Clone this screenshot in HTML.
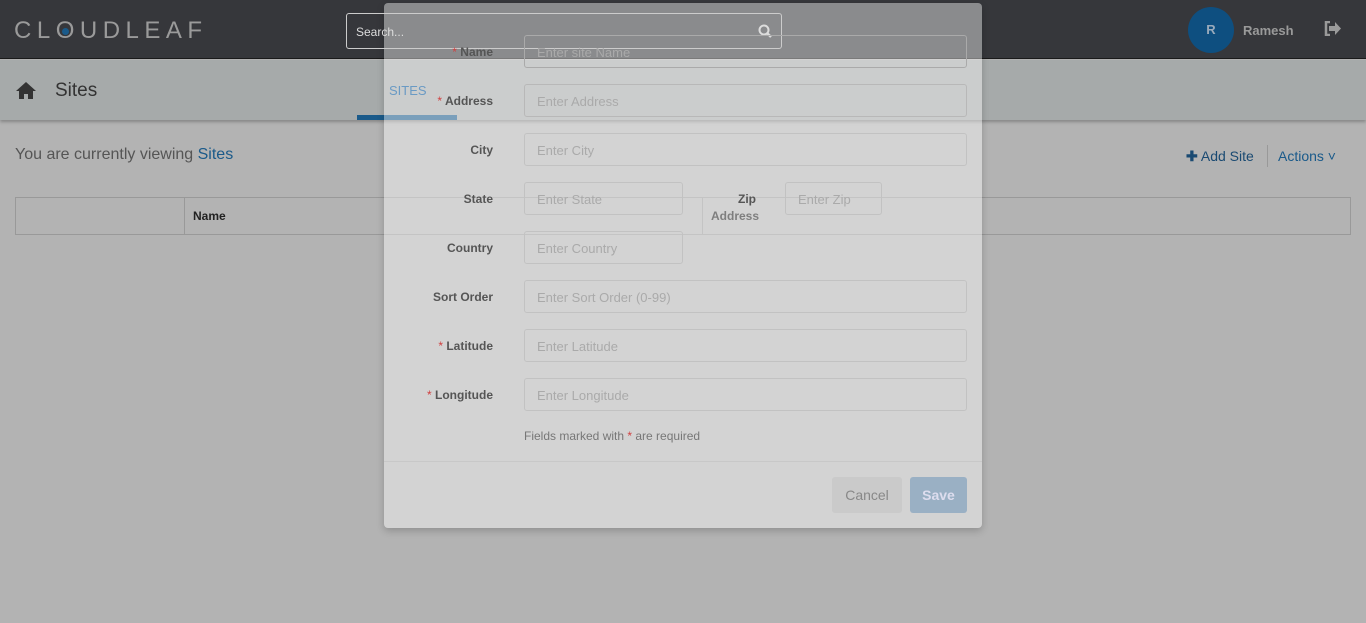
<!DOCTYPE html>
<html><head><meta charset="utf-8"><style>
*{box-sizing:border-box;margin:0;padding:0}
body{width:1366px;height:623px;overflow:hidden;background:#b3b3b3;font-family:"Liberation Sans",sans-serif;position:relative}
.a{position:absolute}
.hdr{left:0;top:0;width:1366px;height:59px;background:#36373b;border-bottom:1px solid #1a1a1a}
.sub{left:0;top:60px;width:1366px;height:60px;background:#a6aaaa;box-shadow:0 2px 3px rgba(0,0,0,.25)}
.lbl{right:873px;font-size:12px;font-weight:bold;color:#555;text-align:right}
.lbl b{color:#d04040;font-weight:normal}
.inp{left:524px;width:443px;height:33px;border:1px solid #c2c2c2;border-radius:3px;font-size:13px;color:#aaa;padding:9px 12px}
</style></head><body>
<div class="a hdr"></div>
<div class="a" style="left:14px;top:17px;font-size:24px;letter-spacing:5.5px;color:#9a9a9a;font-weight:300">CL<span style="position:relative">O<span class="a" style="left:6px;top:11px;width:7px;height:7px;border-radius:50%;background:#1a5a8a"></span></span>UDLEAF</div>
<div class="a" style="left:1188px;top:7px;width:46px;height:46px;border-radius:50%;background:#0e4f80;color:#9ab;font-weight:bold;font-size:13px;text-align:center;line-height:46px">R</div>
<div class="a" style="left:1243px;top:23px;font-size:13px;font-weight:bold;color:#9a9a9a">Ramesh</div>
<svg class="a" style="left:1324px;top:21px" width="17" height="15" viewBox="0 0 17 15"><path d="M6 1H2v13h4" fill="none" stroke="#9a9a9a" stroke-width="2.5"/><path d="M5 5h6V1l6 6.5-6 6.5V10H5z" fill="#9a9a9a"/></svg>
<div class="a sub"></div>
<svg class="a" style="left:15px;top:81px" width="22" height="18" viewBox="0 0 22 18"><path d="M11 1L1 10h3v8h5v-5h4v5h5v-8h3z" fill="#333"/></svg>
<div class="a" style="left:55px;top:80px;font-size:19px;color:#333">Sites</div>
<div class="a" style="left:357px;top:115px;width:100px;height:5px;background:#1a5a8a"></div>
<div class="a" style="left:15px;top:146px;font-size:16px;color:#555">You are currently viewing <span style="color:#1a5a8a">Sites</span></div>
<div class="a" style="left:1186px;top:148px;font-size:14px;color:#1a4a72"><b>✚</b> Add Site</div>
<div class="a" style="left:1267px;top:145px;width:1px;height:22px;background:#999"></div>
<div class="a" style="left:1278px;top:148px;font-size:14px;color:#1a5a8a">Actions ˅</div>
<div class="a" style="left:15px;top:197px;width:1336px;height:38px;border:1px solid #999"></div>
<div class="a" style="left:184px;top:198px;width:1px;height:36px;background:#999"></div>
<div class="a" style="left:702px;top:198px;width:1px;height:36px;background:#999"></div>
<div class="a" style="left:193px;top:209px;font-size:12px;font-weight:bold;color:#222">Name</div>
<div class="a" style="left:711px;top:209px;font-size:12px;font-weight:bold;color:#222">Address</div>
<div class="a" style="left:384px;top:3px;width:598px;height:525px;background:rgba(255,255,255,.42);border-radius:4px;box-shadow:0 3px 8px rgba(0,0,0,.2)"></div>
<div class="a" style="left:346px;top:13px;width:436px;height:36px;border:1px solid #ccc;border-radius:3px;color:#ddd;font-size:12px;padding:11px 9px">Search...<svg class="a" style="right:9px;top:10px" width="14" height="14" viewBox="0 0 14 14"><circle cx="6" cy="6" r="4.5" fill="none" stroke="#ddd" stroke-width="2"/><path d="M9 9l4 4" stroke="#ddd" stroke-width="2.5"/></svg></div>
<div class="a" style="left:389px;top:83px;font-size:13px;color:#6a9ac4">SITES</div>
<div class="a lbl" style="top:45px"><b>*</b> Name</div><div class="a inp" style="top:35px;border-color:#aaa">Enter site Name</div>
<div class="a lbl" style="top:94px"><b>*</b> Address</div><div class="a inp" style="top:84px;border-color:#b8b8b8">Enter Address</div>
<div class="a lbl" style="top:143px">City</div><div class="a inp" style="top:133px">Enter City</div>
<div class="a lbl" style="top:192px">State</div><div class="a inp" style="top:182px;width:159px">Enter State</div>
<div class="a" style="left:738px;top:192px;font-size:12px;font-weight:bold;color:#555">Zip</div>
<div class="a inp" style="top:182px;left:785px;width:97px">Enter Zip</div>
<div class="a lbl" style="top:241px">Country</div><div class="a inp" style="top:231px;width:159px">Enter Country</div>
<div class="a lbl" style="top:290px">Sort Order</div><div class="a inp" style="top:280px">Enter Sort Order (0-99)</div>
<div class="a lbl" style="top:339px"><b>*</b> Latitude</div><div class="a inp" style="top:329px">Enter Latitude</div>
<div class="a lbl" style="top:388px"><b>*</b> Longitude</div><div class="a inp" style="top:378px">Enter Longitude</div>
<div class="a" style="left:524px;top:429px;font-size:12px;color:#777">Fields marked with <span style="color:#d04040">*</span> are required</div>
<div class="a" style="left:384px;top:461px;width:598px;height:1px;background:#c8c8c8"></div>
<div class="a" style="left:832px;top:477px;width:70px;height:36px;background:#cacaca;border-radius:3px;color:#888;font-size:14px;text-align:center;line-height:36px">Cancel</div>
<div class="a" style="left:910px;top:477px;width:57px;height:36px;background:#9ab0c4;border-radius:3px;color:#dde;font-size:14px;font-weight:bold;text-align:center;line-height:36px">Save</div>
</body></html>
